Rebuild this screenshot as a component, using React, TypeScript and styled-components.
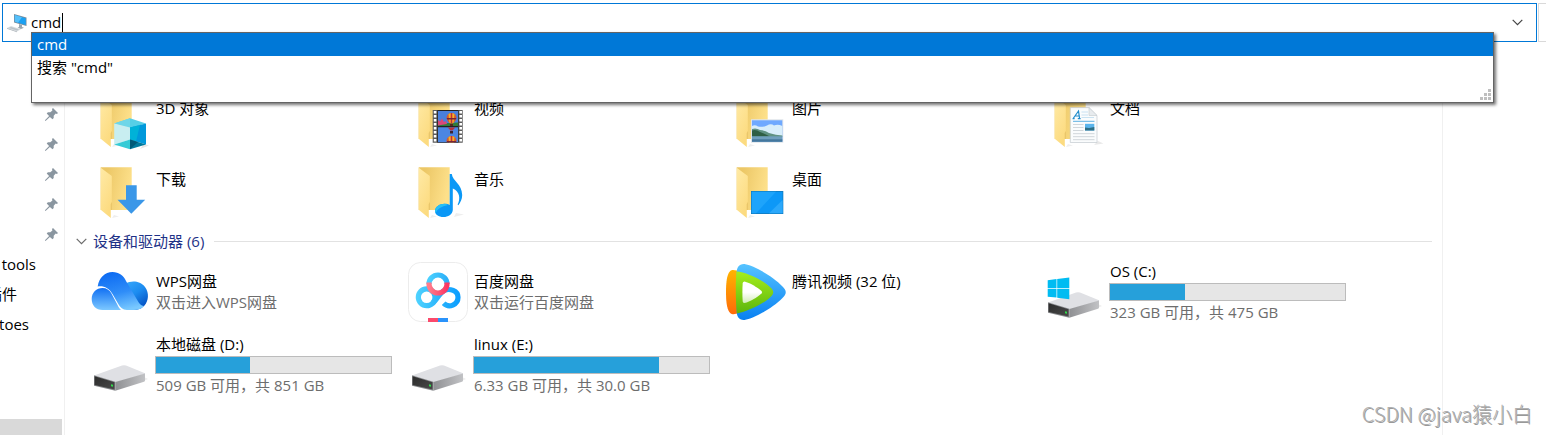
import React from "react";
import styled, { createGlobalStyle } from "styled-components";

const GlobalStyle = createGlobalStyle`
  * { box-sizing: border-box; }
  body {
    margin: 0;
    background: #fff;
    color: #000;
    font-family: "Open Sans", "Noto Sans CJK SC", sans-serif;
    font-size: 15px;
    line-height: 21px;
  }
  a { color: inherit; text-decoration: none; }
  button, input { font: inherit; color: inherit; }
`;

const Page = styled.div`
  position: relative;
  display: flex;
  flex-direction: column;
  min-height: 100vh;
  overflow: hidden;
`;

const TopBar = styled.header`
  position: relative;
  display: flex;
  gap: 1px;
  padding: 3px 0 0 2px;
`;

const AddressBar = styled.div`
  flex: 1;
  display: flex;
  align-items: center;
  height: 39px;
  padding: 0 9px 0 4px;
  border: 1px solid #0078d7;
`;

const AddressInput = styled.input`
  field-sizing: content;
  padding: 0;
  margin: 0 1px 0 3px;
  border: 0;
  outline: 0;
  background: none;
  caret-color: transparent;
`;

const Caret = styled.span`
  width: 1px;
  height: 19px;
  background: #000;
`;

const IconButton = styled.button`
  display: flex;
  margin-left: auto;
  padding: 4px;
  border: 0;
  background: none;
`;

const SearchEdge = styled.div`
  width: 8px;
  border: 1px solid #d9d9d9;
  border-right: 0;
`;

const Suggestions = styled.ul`
  position: absolute;
  z-index: 2;
  top: 32px;
  left: 31px;
  right: 52px;
  height: 71px;
  margin: 0;
  padding: 0;
  list-style: none;
  background: #fff;
  border: 1px solid #646464;
  box-shadow: 2px 2px 3px rgba(0, 0, 0, 0.55);
`;

const Suggestion = styled.li<{ $active?: boolean }>`
  height: 23px;
  padding: 0 5px;
  line-height: 23px;
  background: ${(p) => (p.$active ? "#0078d7" : "transparent")};
  color: ${(p) => (p.$active ? "#fff" : "#000")};
`;

const Grip = styled.svg`
  position: absolute;
  right: 2px;
  bottom: 2px;
`;

const Body = styled.div`
  flex: 1;
  display: flex;
`;

const Sidebar = styled.nav`
  display: flex;
  flex-direction: column;
  width: 65px;
  padding-top: 57px;
  border-right: 1px solid #f0f0f0;
`;

const PinnedRow = styled.a`
  display: flex;
  align-items: center;
  justify-content: flex-end;
  height: 30px;
  padding-right: 6px;
`;

const FolderRow = styled.a<{ $width: number }>`
  display: flex;
  align-items: center;
  justify-content: flex-end;
  width: ${(p) => p.$width}px;
  height: 30px;
  overflow: hidden;
  white-space: nowrap;
`;

const ScrollThumb = styled.div`
  height: 16px;
  margin: auto 2px 0 0;
  background: #d9d9d9;
`;

const Content = styled.main`
  flex: 1;
  min-width: 0;
  margin-right: 103px;
  padding: 50px 10px 36px;
  border-right: 1px solid #f0f0f0;
`;

const Tiles = styled.div`
  display: grid;
  grid-template-columns: repeat(auto-fill, 318px);
  row-gap: 11px;
  padding-left: 15px;
`;

const Tile = styled.a<{ $tall?: boolean }>`
  display: flex;
  align-items: center;
  gap: 5px;
  height: ${(p) => (p.$tall ? 62 : 60)}px;
`;

const TileIcon = styled.svg`
  flex: none;
  width: 60px;
  height: 60px;
`;

const TileText = styled.div`
  width: 237px;
  min-height: 42px;
  white-space: nowrap;
`;

const FolderText = styled(TileText)`
  min-height: 48px;
`;

const Name = styled.div`
  padding-left: 1px;
`;

const Note = styled.div`
  padding-left: 1px;
  color: #6d6d6d;
`;

const Gauge = styled.div`
  height: 18px;
  margin: 1px 0;
  border: 1px solid #bcbcbc;
  background: #e6e6e6;
`;

const GaugeFill = styled.div`
  height: 100%;
  background: #26a0da;
`;

const GroupHeader = styled.button`
  display: flex;
  align-items: center;
  width: 100%;
  height: 22px;
  margin: 7px 0 9px;
  padding: 0 0 0 1px;
  border: 0;
  background: none;
  color: #1e3287;
`;

const GroupTitle = styled.span`
  margin: 0 10px 0 6px;
  white-space: nowrap;
`;

const Rule = styled.span`
  flex: 1;
  height: 1px;
  background: #e2e2e2;
`;

const Watermark = styled.div`
  position: absolute;
  right: 14px;
  bottom: 8px;
  font-family: "Noto Sans CJK SC", sans-serif;
  font-size: 20px;
  font-weight: 300;
  line-height: 26px;
  color: #b0b0b0;
  text-shadow: 1px 1px 0 #999;
`;

const Chevron = ({ color }: { color: string }) => (
  <svg width="11" height="7" viewBox="0 0 11 7" fill="none" stroke={color} strokeWidth="1.2">
    <path d="M.7.8 5.5 5.6 10.3.8" />
  </svg>
);

const Computer = () => (
  <svg width="21" height="20" viewBox="0 0 21 20">
    <path d="M7 1 19.500 4.500V13L7 9.500Z" fill="#7b8d9b" />
    <path d="M7.800 2 18.800 5.200V12L7.800 8.800Z" fill="#1ba1f3" />
    <path d="M7.800 2 15 4.200 11 9.700 7.800 8.800Z" fill="#55c0fa" />
    <path d="m12 11 3 1v2l2 .8-3 1.200-3.500-1.200 1.500-.8Z" fill="#9aa6ae" />
    <path d="m0 15 4-2 10 3.200L10 18.500Z" fill="#d7dcdf" />
    <path d="m2 15 2-.9 8 2.400-2 1Z" fill="#b9c2c8" />
    <path d="m0 15 10 3.500v.8L0 15.800Z" fill="#a9b1b7" />
  </svg>
);

const Pin = () => (
  <svg width="13" height="13" viewBox="0 0 13 13" fill="#8a96a0">
    <path d="M8 0 13 5 11.900 6 10.700 5.600 8.700 7.700 8.700 10 7.500 11.200 4.900 8.900.8 12.800 0 12.900.2 12 4.100 7.900 1.700 5.500 2.900 4.300 5.300 4.300 7.400 2.400 7 1.100Z" />
  </svg>
);

const Folder = ({ children }: { children: React.ReactNode }) => (
  <TileIcon viewBox="0 0 60 60">
    <defs>
      <linearGradient id="folderBack" x1="0" y1="0" x2="1" y2="0.300">
        <stop offset="0.200" stopColor="#ecc766" />
        <stop offset="1" stopColor="#fde08a" />
      </linearGradient>
      <linearGradient id="folderFlap" x1="0" y1="0" x2="0.500" y2="1">
        <stop offset="0" stopColor="#ffeaa6" />
        <stop offset="1" stopColor="#fcdb80" />
      </linearGradient>
    </defs>
    <path d="M22 55 29 53.500 24 52Z" fill="#eee" />
    <path d="M10.700 4.300H41.700V47H10.700Z" fill="url(#folderBack)" />
    <path d="M10.700 4.800 21.800 13V39L20.800 41V55L10.700 46.800Z" fill="url(#folderFlap)" />
    <path d="M20.800 41 21.800 39V47H20.800Z" fill="#e7c368" />
    <g transform="translate(10 4)">{children}</g>
  </TileIcon>
);

const Cube = () => (
  <>
    <path d="M40 53 49 49.500 44 48Z" fill="#e6e6e6" />
    <path d="M30 22.300 46 27.600 30 32 14.200 27.600Z" fill="#56cfe6" />
    <path d="M30 22.300V32L14.200 27.600Z" fill="#6fd6e8" />
    <path d="M14.200 27.600 30 31.500V43.500L14.200 48.500Z" fill="#c8eef1" />
    <path d="M30 31.500 46 27.600V48.500L30 43.500Z" fill="#0099db" />
    <path d="M30 31.500 40 29 36 45.300 30 43.500Z" fill="#00b2d8" />
    <path d="M14.200 48.500 30 43.500V53.300Z" fill="#35cbd6" />
    <path d="M30 43.500 46 48.500 30 53.300Z" fill="#00799c" />
    <path d="M30 43.500 38 46 30 53.300Z" fill="#005a78" />
  </>
);

const Balloon = ({ y }: { y: number }) => (
  <g transform={`translate(33.500 ${y})`}>
    <path d="M-5 0A5 5 0 0 1 5 0Q4.500 3 1.500 5.500H-1.500Q-4.500 3-5 0Z" fill="#d9582a" />
    <path d="M-3 -4A5 5 0 0 1 3-4L2 5H-2Z" fill="#f2b32a" />
    <path d="M-.8-5H.8V5H-.8Z" fill="#c22c3c" />
    <path d="M-4.900 0H4.900L4.200 1.500H-4.200Z" fill="#7a2436" />
    <path d="M-1.500 6H1.500V8H-1.500Z" fill="#54281c" />
  </g>
);

const Film = () => (
  <>
    <path d="M14.700 14H44.700V46.700H14.700Z" fill="#5b5b5b" />
    {[0, 1, 2, 3, 4, 5, 6, 7].map((i) => (
      <path key={i} d={`M15.800 ${15 + i * 4}h2.600v2.400h-2.600zM41.400 ${15 + i * 4}h2.600v2.400h-2.600z`} fill="#fff" />
    ))}
    <path d="M19.300 14H40.500V46.700H19.300Z" fill="#222" />
    <svg x="20" y="15" width="20" height="15" viewBox="20 15 20 15">
      <path d="M20 15H40V30H20Z" fill="#4a7fdc" />
      <path d="M20 28.500 30 27 40 26.500V30H20Z" fill="#2f7d3a" />
      <path d="M20 24 22 25.500 24 22.500 26 26 28 25 29 28 20 29.500Z" fill="#d9487a" />
      <Balloon y={22} />
    </svg>
    <svg x="20" y="31.200" width="20" height="15" viewBox="20 31.200 20 15">
      <path d="M20 31H40V47H20Z" fill="#4b86e2" />
      <path d="M29.500 31.200H37.500L34.500 34.500H32.500Z" fill="#b8323a" />
      <path d="M32 35H35V37.500H32Z" fill="#3b2333" />
      <Balloon y={45} />
    </svg>
  </>
);

const Landscape = () => (
  <>
    <path d="M15 23.300H47.300V46.700H15Z" fill="#dfe4ea" />
    <path d="M16 24.300H46.300V45.700H16Z" fill="#6fa9ff" />
    <path d="M16 30Q19 28.500 22 30.500 27 31.500 31 29.500 35 27 38 29.500 42 28 46.300 30V41H16Z" fill="#d8eefb" />
    <path d="M16 33Q20 31.500 24 34 29 34 33 37 40 39 46.300 39.500V41H16Z" fill="#5f9283" />
    <path d="M16 34.500Q20 33 24 36 29 38 34 40.500H16Z" fill="#2f5f45" />
    <path d="M16 40.300H46.300V45.700H16Z" fill="#6f9fbe" />
    <path d="M16 43.300H46.300V45.700H16Z" fill="#44779d" />
  </>
);

const Document = () => (
  <>
    <path d="M40 49 49.500 47.500 44 45Z" fill="#e9e9e9" />
    <path d="M16.300 11.600H35L43 19.500V46.500H16.300Z" fill="#fafcfd" stroke="#c3c9ce" strokeWidth="0.700" />
    <path d="M35 11.600V19.500H43Z" fill="#e7ebee" stroke="#c3c9ce" strokeWidth="0.600" />
    <path d="M19.200 22.500 24.500 15 25.600 22.500M20.800 20H25.200M18.600 22.600H20.600M23.800 22.600H26.600" fill="none" stroke="#1f8ccc" strokeWidth="1.200" />
    <path d="M27.500 16H34M27.500 19H34M27.500 21.500H40" stroke="#c3dff0" strokeWidth="0.900" />
    <path d="M19 25.300H40.500" stroke="#5cb0e2" strokeWidth="1" />
    <path d="M19 28.500H29.500M19 31.500H29.500M19 34.500H29.500M19 37.700H40.500M19 40.700H40.500M19 43.700H40.500" stroke="#ccd2d7" strokeWidth="0.900" />
    <path d="M31 27.800H40.300V34.500H31Z" fill="#5bb5ec" />
    <path d="M31 31.500 35 32 40.300 31V34.500H31Z" fill="#2e6f86" />
  </>
);

const DownArrow = () => (
  <path d="M26 18.300H36.700V32.700H45.200L31.300 46.800 17.500 32.700H26Z" fill="#3a97e8" />
);

const MusicNote = () => (
  <>
    <path d="M36 50 46 47.500 38 46Z" fill="#eee" />
    <path
      d="M31.700 7H33.800C34.500 14 44 17 44.200 28 44.200 32 42.500 35.500 40.400 38.200L39.600 37.600C42.500 32 42 24.500 34.800 21.500V43C34.500 47.500 30 50 25.500 50 20.500 50 17 47.500 17 44 17 39.500 22 36.700 26.500 36.700 28.700 36.700 30.500 37.200 31.700 38Z"
      fill="#0b98f6"
    />
    <path d="M17 44C17 39.500 22 36.700 26.500 36.700Q29 37 30 38 20 40 17.500 46Z" fill="#27c0f5" />
  </>
);

const DesktopScreen = () => (
  <>
    <path d="M15 24H47.300V47H15Z" fill="#1377b5" />
    <path d="M15.700 24.700H46.600V46.300H15.700Z" fill="#0d98f7" />
    <path d="M15.700 24.700H40L20 46.300H15.700Z" fill="#1ea4fb" />
    <path d="M46.600 33V46.300H33Z" fill="#2ba8fb" />
  </>
);

const WpsCloud = () => (
  <TileIcon viewBox="0 0 60 60">
    <defs>
      <linearGradient id="wpsMain" x1="0.300" y1="0" x2="0.600" y2="1">
        <stop offset="0" stopColor="#0d6bf2" />
        <stop offset="0.550" stopColor="#2f8df8" />
        <stop offset="1" stopColor="#79c9ff" />
      </linearGradient>
      <linearGradient id="wpsRight" x1="0" y1="0" x2="0.600" y2="1">
        <stop offset="0" stopColor="#35a6fb" />
        <stop offset="0.500" stopColor="#1c8cf0" />
        <stop offset="1" stopColor="#0452c4" />
      </linearGradient>
      <linearGradient id="wpsLeft" x1="0" y1="0" x2="0" y2="1">
        <stop offset="0" stopColor="#1170f3" />
        <stop offset="1" stopColor="#7cc8ff" />
      </linearGradient>
    </defs>
    <path d="M36 21.500C41 18.500 50 18.500 55 25 59.500 31 58.500 39 54.500 43.500 51 47.500 46 48 42 48Z" fill="url(#wpsRight)" />
    <path d="M7.700 24.500C9 15.500 15 10 22.500 10 29 10 33.500 13.500 36 19L47.500 38.500C49 41.500 51 43.800 54 44 51 47 47.500 48 44 48H37C32.500 48 30 45 28 41.500L22.500 32C19 26 13.500 23.500 7.700 24.500Z" fill="url(#wpsMain)" />
    <path d="M1.700 37C1.700 30.500 6.500 26 12.500 26 16.500 26 19.500 28 21.300 31.200L26.500 41C28 44 29 46 31 48H12.500C6 48 1.700 43.500 1.700 37Z" fill="url(#wpsLeft)" />
  </TileIcon>
);

const BaiduDisk = () => (
  <TileIcon viewBox="0 0 60 60">
    <defs>
      <linearGradient id="bdTop" x1="0" y1="0" x2="1" y2="0">
        <stop offset="0" stopColor="#4ad0ff" />
        <stop offset="1" stopColor="#2cb0f8" />
      </linearGradient>
      <linearGradient id="bdPink" x1="0" y1="0" x2="1" y2="0">
        <stop offset="0" stopColor="#ff7c8b" />
        <stop offset="1" stopColor="#fb3763" />
      </linearGradient>
      <linearGradient id="bdBlue" gradientUnits="userSpaceOnUse" x1="8" y1="0" x2="52" y2="0">
        <stop offset="0" stopColor="#4fd3ff" />
        <stop offset="0.500" stopColor="#2db6fb" />
        <stop offset="1" stopColor="#0a9dff" />
      </linearGradient>
    </defs>
    <rect x="0.500" y="0.500" width="59" height="59" rx="12" fill="#fff" stroke="#ececec" />
    <g fill="none" strokeWidth="5.200">
      <path d="M21 22A9 9 0 0 1 39 22" stroke="url(#bdTop)" />
      <path d="M24.600 29.300A8.400 8.400 0 1 0 24.600 41.300C28 38.500 32 30.500 36.500 28.400 41.500 26.200 50 28.500 50 35.300A8.400 8.400 0 0 1 35.600 41.200" stroke="url(#bdBlue)" />
      <path d="M23 28.200A8.400 8.400 0 0 1 24.600 41.300" stroke="url(#bdBlue)" />
      <path d="M21 20.500V22A9 9 0 0 0 39 22V20.500" stroke="url(#bdPink)" />
    </g>
    <path d="M20 56H30V60H20Z" fill="#fb4a6c" />
    <path d="M30 56H40V60H30Z" fill="#2a93fb" />
  </TileIcon>
);

const TencentVideo = () => (
  <TileIcon viewBox="0 0 60 60">
    <defs>
      <linearGradient id="txOrange" x1="0" y1="0" x2="0" y2="1">
        <stop offset="0" stopColor="#ffb400" />
        <stop offset="1" stopColor="#ff6a08" />
      </linearGradient>
      <linearGradient id="txBlue" x1="0" y1="0" x2="0" y2="1">
        <stop offset="0" stopColor="#56c3ff" />
        <stop offset="1" stopColor="#0880f2" />
      </linearGradient>
      <linearGradient id="txGreen" x1="0" y1="0" x2="0" y2="1">
        <stop offset="0" stopColor="#a5ee1c" />
        <stop offset="1" stopColor="#5cb50c" />
      </linearGradient>
      <linearGradient id="txWhite" x1="0" y1="0" x2="0" y2="1">
        <stop offset="0.500" stopColor="#fff" />
        <stop offset="1" stopColor="#d2ecb8" />
      </linearGradient>
    </defs>
    <path d="M7 8C3 8 0 13 0 30S3 52.300 7.500 52.300L14 51V9Z" fill="url(#txOrange)" />
    <path d="M18.500 2C28 3.500 48 15 56 24 61 29 61 31.500 56 36.500 48 45 28 56.500 18.500 58 13 58.500 10.700 54 10.700 50V10C10.700 6 13 1.600 18.500 2Z" fill="url(#txBlue)" />
    <path d="M10.500 9.500C20 10 38 18.500 45 26 48 29 48 31.500 45 34.500 38 42 20 50 11 51.500 9.500 40 9.500 20 10.500 9.500Z" fill="url(#txGreen)" />
    <path d="M18.500 19.500C24 21 31 25 35.500 29Q36.800 30.200 35.500 31.400C31 35.500 24 39.500 18.500 41Q17 41 16.700 39.500C16.300 33 16.300 27 16.700 21Q17 19.500 18.500 19.500Z" fill="url(#txWhite)" />
  </TileIcon>
);

const DriveIcon = ({ system }: { system?: boolean }) => (
  <TileIcon viewBox="0 0 60 60">
    <defs>
      <linearGradient id="driveSide" x1="0" y1="0" x2="1" y2="0">
        <stop offset="0" stopColor="#8f9093" />
        <stop offset="1" stopColor="#c1c2c5" />
      </linearGradient>
      <linearGradient id="driveFront" x1="0" y1="0" x2="1" y2="1">
        <stop offset="0" stopColor="#2c2c2c" />
        <stop offset="1" stopColor="#4a4a4a" />
      </linearGradient>
    </defs>
    <path d="M50 47.500 58 44 54 42Z" fill="#ededed" />
    <path d="M4 40.500 32 30.500Q34 29.800 36 30.500L55 38.300V39L25.500 47.500Z" fill="#dfe0e4" />
    <path d="M25.300 47 55 38.500V45.500Q55 46.300 54 46.700L25.300 55.700Z" fill="url(#driveSide)" />
    <path d="M4 40.300 25.300 46.800V55.700L4 50.800Z" fill="#87898c" />
    <path d="M4.600 41.300 24.500 47.200V54.500L4.600 50Z" fill="url(#driveFront)" />
    <path d="M21 49.200 23 49.700V51.700L21 51.200Z" fill="#2fe04a" />
    {system && (
      <path
        d="M3.700 18.200 12.500 17.100V26H3.700ZM13.200 17 25.300 15.500V26H13.200ZM3.700 26.700H12.500V35.600L3.700 34.700ZM13.200 26.700H25.300V37.200L13.200 35.700Z"
        fill="#00bcf2"
      />
    )}
  </TileIcon>
);

const folders = [
  { name: "3D 对象", art: <Cube /> },
  { name: "视频", art: <Film /> },
  { name: "图片", art: <Landscape /> },
  { name: "文档", art: <Document /> },
  { name: "下载", art: <DownArrow /> },
  { name: "音乐", art: <MusicNote /> },
  { name: "桌面", art: <DesktopScreen /> },
];

const apps = [
  { name: "WPS网盘", note: "双击进入WPS网盘", icon: <WpsCloud /> },
  { name: "百度网盘", note: "双击运行百度网盘", icon: <BaiduDisk /> },
  { name: "腾讯视频 (32 位)", note: "", icon: <TencentVideo /> },
];

const drives = [
  { name: "OS (C:)", free: "323", total: "475", system: true },
  { name: "本地磁盘 (D:)", free: "509", total: "851" },
  { name: "linux (E:)", free: "6.33", total: "30.0" },
];

const shortcuts = [
  { label: "tools", width: 36 },
  { label: "插件", width: 17 },
  { label: "toes", width: 29 },
];

const usedPercent = (free: string, total: string) => (1 - Number(free) / Number(total)) * 100;

export default function App() {
  return (
    <Page>
      <GlobalStyle />
      <TopBar>
        <AddressBar>
          <Computer />
          <AddressInput aria-label="地址" defaultValue="cmd" />
          <Caret />
          <IconButton aria-label="以前的位置">
            <Chevron color="#444" />
          </IconButton>
        </AddressBar>
        <SearchEdge />
        <Suggestions role="listbox" aria-label="建议">
          <Suggestion role="option" aria-selected $active>
            cmd
          </Suggestion>
          <Suggestion role="option" aria-selected={false}>
            搜索 "cmd"
          </Suggestion>
          <Grip width="11" height="11" viewBox="0 0 11 11" fill="#bfbfbf">
            <path d="M8 0h3v3H8zM4 4h3v3H4zM8 4h3v3H8zM0 8h3v3H0zM4 8h3v3H4zM8 8h3v3H8z" />
          </Grip>
        </Suggestions>
      </TopBar>
      <Body>
        <Sidebar aria-label="快速访问">
          {[1, 2, 3, 4, 5].map((n) => (
            <PinnedRow key={n} href="#" aria-label={`已固定 ${n}`}>
              <Pin />
            </PinnedRow>
          ))}
          {shortcuts.map((s) => (
            <FolderRow key={s.label} href="#" $width={s.width}>
              {s.label}
            </FolderRow>
          ))}
          <ScrollThumb />
        </Sidebar>
        <Content>
          <Tiles>
            {folders.map((f) => (
              <Tile key={f.name} href="#">
                <Folder>{f.art}</Folder>
                <FolderText>
                  <Name>{f.name}</Name>
                </FolderText>
              </Tile>
            ))}
          </Tiles>
          <GroupHeader aria-expanded>
            <Chevron color="#6b6b6b" />
            <GroupTitle>设备和驱动器 (6)</GroupTitle>
            <Rule />
          </GroupHeader>
          <Tiles>
            {apps.map((a) => (
              <Tile key={a.name} href="#" $tall>
                {a.icon}
                <TileText>
                  <Name>{a.name}</Name>
                  {a.note && <Note>{a.note}</Note>}
                </TileText>
              </Tile>
            ))}
            {drives.map((d) => (
              <Tile key={d.name} href="#" $tall>
                <DriveIcon system={d.system} />
                <TileText>
                  <Name>{d.name}</Name>
                  <Gauge>
                    <GaugeFill style={{ width: `${usedPercent(d.free, d.total)}%` }} />
                  </Gauge>
                  <Note>
                    {d.free} GB 可用，共 {d.total} GB
                  </Note>
                </TileText>
              </Tile>
            ))}
          </Tiles>
        </Content>
      </Body>
      <Watermark>CSDN @java猿小白</Watermark>
    </Page>
  );
}
